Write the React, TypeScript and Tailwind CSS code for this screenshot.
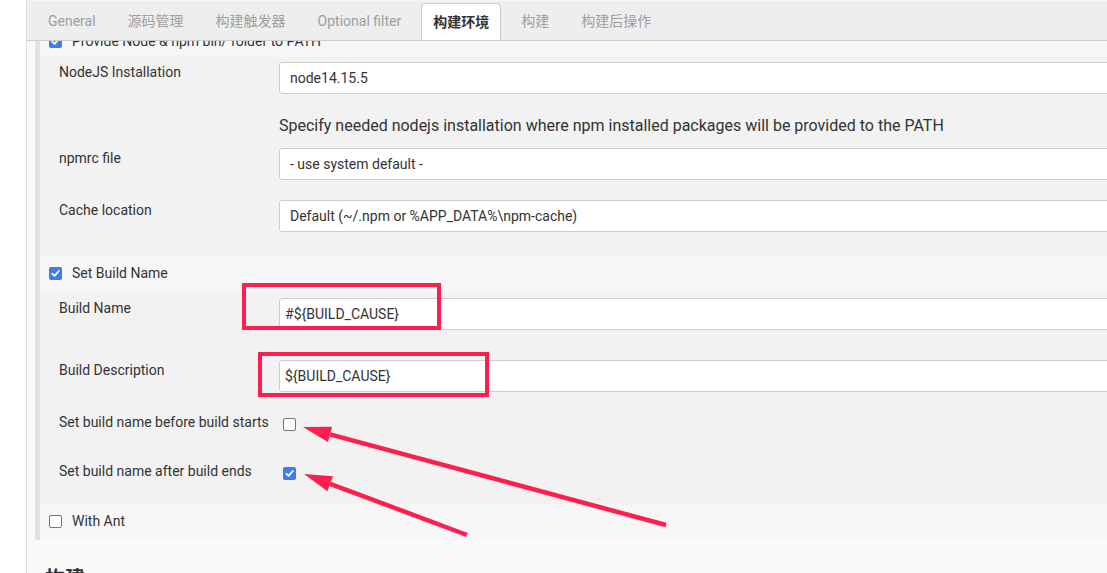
import React from "react";

const FONT = { fontFamily: 'Roboto, "Noto Sans CJK SC", sans-serif' };

function Check({ checked }: { checked: boolean }) {
  return checked ? (
    <span className="w-[13px] h-[13px] rounded-[2px] bg-[#3e7cf0] flex items-center justify-center shrink-0">
      <svg width="9" height="9" viewBox="0 0 10 10">
        <path d="M1.4 5.3 L4 7.7 L8.7 2.2" stroke="white" strokeWidth="2" fill="none" strokeLinecap="round" strokeLinejoin="round" />
      </svg>
    </span>
  ) : (
    <span className="block w-[13px] h-[13px] rounded-[2px] border border-[#767676] bg-white shrink-0" />
  );
}

function SelectBox({ children }: { children: React.ReactNode }) {
  return (
    <div className="flex-1 h-[32px] bg-white border border-[#cccccc] rounded-[3px] flex items-center pl-[10px] text-[14px] text-[#333]">
      {children}
    </div>
  );
}

function TextBox({ children }: { children: React.ReactNode }) {
  return (
    <div className="flex-1 h-[32px] bg-white border border-[#cccccc] rounded-[3px] flex items-center pl-[5px] text-[14px] text-[#333]">
      {children}
    </div>
  );
}

function Label({ children }: { children: React.ReactNode }) {
  return <div className="w-[239px] shrink-0 pl-[19px] text-[14px] leading-[20px] text-[#333]">{children}</div>;
}

function CheckRow({ checked, label, className = "" }: { checked: boolean; label: string; className?: string }) {
  return (
    <div className={"bg-[#f7f7f7] " + className}>
      <div className="flex items-center h-[24px] pl-[9px] gap-[10px] text-[14px] text-[#333]">
        <Check checked={checked} />
        <span>{label}</span>
      </div>
    </div>
  );
}

export default function App() {
  const tabs = ["General", "源码管理", "构建触发器", "Optional filter", "构建环境", "构建", "构建后操作"];
  const red = "#ff1f4e";
  return (
    <div className="relative w-[1107px] h-[573px] overflow-hidden flex bg-white" style={FONT}>
      <div className="w-[26px] shrink-0 bg-white" />
      <div className="flex-1 min-w-0 border-l border-[#dddddd] bg-[#fafafa] flex flex-col">
        {/* Tab bar */}
        <div className="h-[41px] shrink-0 bg-[#eeeeee] border-b border-[#cccccc] border-t border-t-[#f6f6f6] flex items-end pl-[9px] gap-2">
          {tabs.map((t) =>
            t === "构建环境" ? (
              <div
                key={t}
                className="h-[37px] px-[11px] flex items-center bg-white border border-b-0 border-[#cccccc] rounded-t-[4px] text-[14px] font-bold text-[#333]"
              >
                {t}
              </div>
            ) : (
              <div key={t} className="h-[37px] px-3 flex items-center text-[14px] text-[#9e9e9e]">
                {t}
              </div>
            )
          )}
        </div>
        {/* Body */}
        <div className="flex-1 overflow-hidden">
          <div className="w-[1200px] -mt-[17px] pl-[8px]">
            <div className="border-l-[5px] border-[#e2e2e2]">
              <CheckRow checked={true} label="Provide Node & npm bin/ folder to PATH" className="h-[33px] pt-[5px]" />
              {/* Nested block 1 */}
              <div className="bg-[#f2f2f2] pt-[5px] pb-[25px]">
                <div className="flex">
                  <Label>NodeJS Installation</Label>
                  <SelectBox>node14.15.5</SelectBox>
                </div>
                <div className="ml-[239px] mt-[22px] mb-[12px] text-[16px] leading-[20px] text-[#333]">
                  Specify needed nodejs installation where npm installed packages will be provided to the PATH
                </div>
                <div className="flex">
                  <Label>npmrc file</Label>
                  <SelectBox>- use system default -</SelectBox>
                </div>
                <div className="flex mt-[20px]">
                  <Label>Cache location</Label>
                  <SelectBox>Default (~/.npm or %APP_DATA%\npm-cache)</SelectBox>
                </div>
              </div>
              <CheckRow checked={true} label="Set Build Name" className="h-[36px] pt-[4px]" />
              {/* Nested block 2 */}
              <div className="bg-[#f2f2f2] pt-[5px] pb-[24px]">
                <div className="flex">
                  <Label>Build Name</Label>
                  <TextBox>#{"${BUILD_CAUSE}"}</TextBox>
                </div>
                <div className="flex mt-[30px]">
                  <Label>Build Description</Label>
                  <TextBox>{"${BUILD_CAUSE}"}</TextBox>
                </div>
                <div className="flex mt-[20px] h-[20px]">
                  <Label>Set build name before build starts</Label>
                  <div className="ml-[4px] mt-[6px]">
                    <Check checked={false} />
                  </div>
                </div>
                <div className="flex mt-[29px] h-[20px]">
                  <Label>Set build name after build ends</Label>
                  <div className="ml-[4px] mt-[6px]">
                    <Check checked={true} />
                  </div>
                </div>
              </div>
              <CheckRow checked={false} label="With Ant" className="h-[35px] pt-[4px]" />
            </div>
            <div className="mt-[25px] pl-[10px] text-[20px] leading-[28px] font-bold text-[#333]">构建</div>
          </div>
        </div>
      </div>

      {/* Annotations */}
      <div className="absolute left-[242px] top-[283px] w-[199px] h-[47px] border-[4px] border-[#ff1f4e]" />
      <div className="absolute left-[258px] top-[352px] w-[231px] h-[45px] border-[4px] border-[#ff1f4e]" />
      <svg className="absolute left-0 top-0 pointer-events-none" width="1107" height="573" viewBox="0 0 1107 573">
        <line x1="666" y1="525" x2="330" y2="434.4" stroke={red} strokeWidth="4.5" />
        <polygon points="303,427 332.1,426.7 327.9,442.1" fill={red} />
        <line x1="467" y1="535" x2="330.2" y2="483.8" stroke={red} strokeWidth="4.5" />
        <polygon points="304,474 333,476.3 327.4,491.3" fill={red} />
      </svg>
    </div>
  );
}
